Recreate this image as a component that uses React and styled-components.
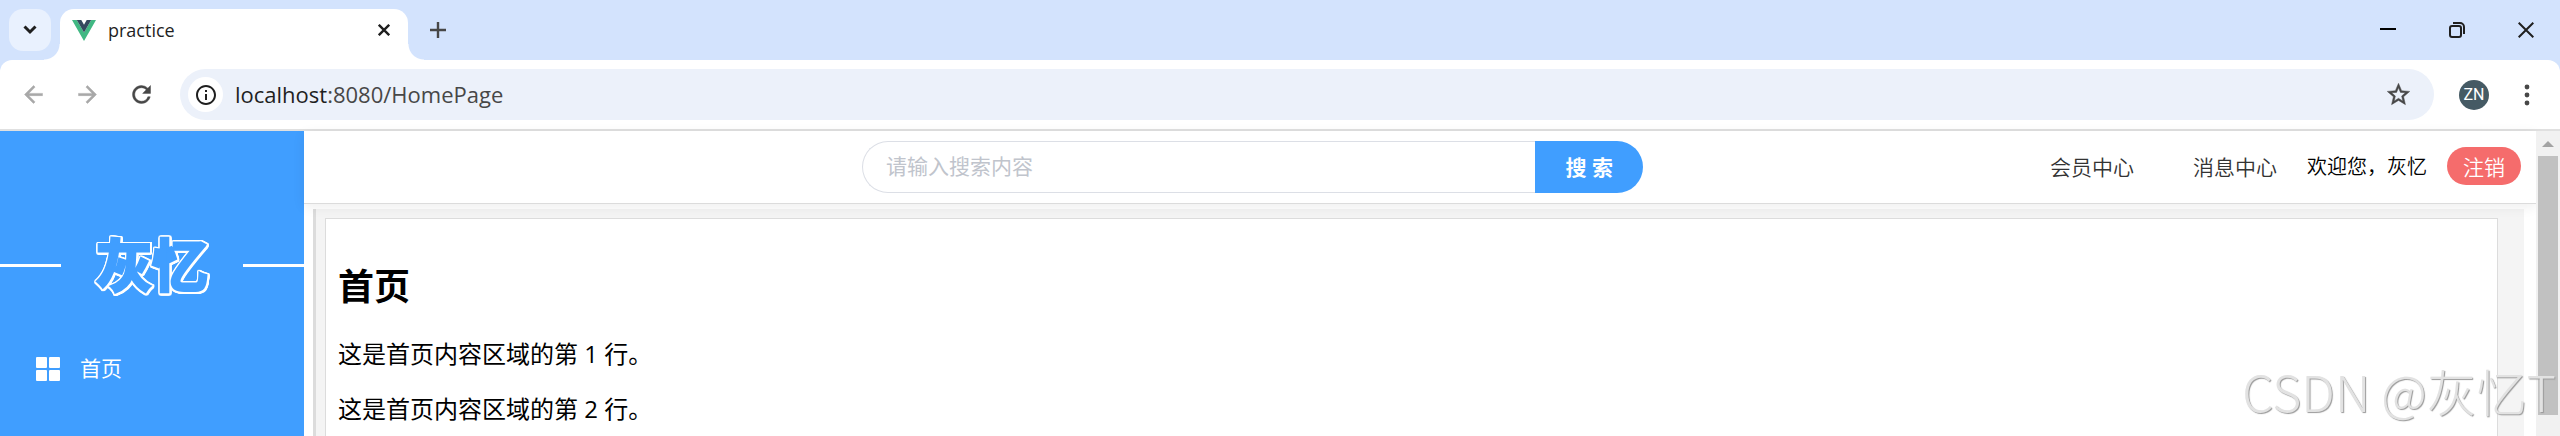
import React from 'react'
import styled, { createGlobalStyle } from 'styled-components'
import {
  MdArrowBack, MdArrowForward, MdRefresh, MdStarBorder, MdInfoOutline,
} from 'react-icons/md'

const paragraphs = [1, 2]

export default function App() {
  return (
    <Window>
      <GlobalStyle />
      <TabStrip />
      <Toolbar />
      <Page>
        <Sidebar />
        <Content>
          <TopBar />
          <HomePage />
        </Content>
        <ScrollBar />
      </Page>
      <Watermark>CSDN @灰忆T</Watermark>
    </Window>
  )
}

const TabStrip = () => (
  <Strip>
    <TabSearch type="button" aria-label="Search tabs">
      <svg width="14" height="10" viewBox="0 0 14 10" fill="none" stroke="currentColor" strokeWidth="3">
        <path d="M1.5 1.5L7 7l5.500-5.500" />
      </svg>
    </TabSearch>
    <Tab>
      <svg width="24" height="21" viewBox="0 0 24 21">
        <path d="M0 0h4.800L12 12.400 19.200 0H24L12 21z" fill="#41b883" />
        <path d="M4.800 0h4.500L12 4.700 14.700 0h4.500L12 12.400z" fill="#34495e" />
      </svg>
      <TabTitle>practice</TabTitle>
      <IconButton type="button" aria-label="Close tab">
        <svg width="12" height="12" viewBox="0 0 12 12" stroke="currentColor" strokeWidth="2.400">
          <path d="M.8.8l10.400 10.400M11.200.8L.8 11.200" />
        </svg>
      </IconButton>
    </Tab>
    <NewTab type="button" aria-label="New tab">
      <svg width="16" height="16" viewBox="0 0 16 16" stroke="currentColor" strokeWidth="2.400">
        <path d="M8 0v16M0 8h16" />
      </svg>
    </NewTab>
    <WindowControls>
      <IconButton type="button" aria-label="Minimize">
        <svg width="16" height="16" viewBox="0 0 16 16">
          <path d="M0 6h16v2H0z" />
        </svg>
      </IconButton>
      <IconButton type="button" aria-label="Restore">
        <svg width="16" height="16" viewBox="0 0 16 16" fill="none" stroke="currentColor" strokeWidth="2">
          <rect x="1" y="4" width="11" height="11" rx="2" />
          <path d="M4 1h7a4 4 0 0 1 4 4v7" />
        </svg>
      </IconButton>
      <IconButton type="button" aria-label="Close">
        <svg width="16" height="16" viewBox="0 0 16 16" stroke="currentColor" strokeWidth="2">
          <path d="M.7.700l14.600 14.600M15.300.7L.7 15.300" />
        </svg>
      </IconButton>
    </WindowControls>
  </Strip>
)

const Toolbar = () => (
  <Bar>
    <NavButtons>
      <IconButton type="button" aria-label="Back" $color="#a8a8a8"><ToolIcon as={MdArrowBack} size={27} /></IconButton>
      <IconButton type="button" aria-label="Forward" $color="#a8a8a8"><ToolIcon as={MdArrowForward} size={27} /></IconButton>
      <IconButton type="button" aria-label="Reload" $color="#474747"><ToolIcon as={MdRefresh} size={27} /></IconButton>
    </NavButtons>
    <Omnibox>
      <SiteInfo type="button" aria-label="Site information"><MdInfoOutline size={24} /></SiteInfo>
      <Url><b>localhost</b>:8080/HomePage</Url>
      <IconButton type="button" aria-label="Bookmark" $color="#474747">
        <ToolIcon as={MdStarBorder} size={27} />
      </IconButton>
    </Omnibox>
    <Avatar type="button">ZN</Avatar>
    <IconButton type="button" aria-label="Menu" $color="#474747">
      <svg width="6" height="22" viewBox="0 0 6 22" fill="currentColor">
        <circle cx="3" cy="3" r="2.400" />
        <circle cx="3" cy="11" r="2.400" />
        <circle cx="3" cy="19" r="2.400" />
      </svg>
    </IconButton>
  </Bar>
)

const Sidebar = () => (
  <Aside>
    <LogoRow>
      <Logo>灰忆</Logo>
    </LogoRow>
    <MenuItem href="#home">
      <svg width="24" height="24" viewBox="0 0 24 24" fill="currentColor">
        <rect width="11" height="11" rx="1" />
        <rect x="13" width="11" height="11" rx="1" />
        <rect y="13" width="11" height="11" rx="1" />
        <rect x="13" y="13" width="11" height="11" rx="1" />
      </svg>
      <span>首页</span>
    </MenuItem>
  </Aside>
)

const TopBar = () => (
  <Header>
    <Search>
      <SearchInput type="text" placeholder="请输入搜索内容" aria-label="请输入搜索内容" />
      <SearchButton type="submit">搜 索</SearchButton>
    </Search>
    <UserNav>
      <NavLink href="#member">会员中心</NavLink>
      <NavLink href="#message">消息中心</NavLink>
      <Welcome>欢迎您，灰忆</Welcome>
      <Logout type="button">注销</Logout>
    </UserNav>
  </Header>
)

const HomePage = () => (
  <Main>
    <Card>
      <Title>首页</Title>
      {paragraphs.map(n => (
        <Text key={n}>这是首页内容区域的第 {n} 行。</Text>
      ))}
    </Card>
  </Main>
)

const ScrollBar = () => (
  <Track>
    <svg width="12" height="6" viewBox="0 0 12 6" fill="#a3a3a3">
      <path d="M6 0l6 6H0z" />
    </svg>
    <Thumb />
  </Track>
)

const GlobalStyle = createGlobalStyle`
  * {
    box-sizing: border-box;
  }
  body {
    margin: 0;
    font-family: "Open Sans", "Noto Sans CJK SC", sans-serif;
    font-size: 21px;
    color: #000;
  }
  button, input {
    font: inherit;
  }
  a {
    text-decoration: none;
  }
  svg {
    display: block;
    flex: none;
  }
`

const Window = styled.div`
  position: relative;
  display: flex;
  flex-direction: column;
  height: 100vh;
  overflow: hidden;
  background: #d3e3fd;
`
const IconButton = styled.button`
  display: flex;
  flex: none;
  padding: 0;
  border: 0;
  background: none;
  color: ${p => p.$color || '#1f1f1f'};
`

const Strip = styled.div`
  display: flex;
  align-items: center;
  flex: none;
  height: 60px;
  padding: 0 26px 0 9px;
`
const TabSearch = styled(IconButton)`
  align-items: center;
  justify-content: center;
  width: 42px;
  height: 42px;
  border-radius: 14px;
  background: #e9f1fe;
`
const Tab = styled.div`
  position: relative;
  display: flex;
  align-items: center;
  align-self: flex-end;
  width: 348px;
  height: 51px;
  margin-left: 9px;
  padding: 0 18px 9px 12px;
  border-radius: 14px 14px 0 0;
  background: #fff;
  &::before,
  &::after {
    content: '';
    position: absolute;
    bottom: 0;
    width: 16px;
    height: 16px;
  }
  &::before {
    right: 100%;
    background: radial-gradient(circle at 0 0, transparent 15px, #fff 16px);
  }
  &::after {
    left: 100%;
    background: radial-gradient(circle at 100% 0, transparent 15px, #fff 16px);
  }
`
const TabTitle = styled.span`
  flex: 1;
  margin-left: 12px;
  font-size: 18px;
  line-height: 24px;
  color: #1f1f1f;
`
const NewTab = styled(IconButton)`
  margin-left: 22px;
  color: #474747;
`
const WindowControls = styled.div`
  display: flex;
  gap: 53px;
  margin-left: auto;
`

const Bar = styled.div`
  display: flex;
  align-items: center;
  flex: none;
  height: 71px;
  padding: 0 30px 0 20px;
  border-bottom: 2px solid #e0e0e0;
  border-radius: 12px 12px 0 0;
  background: #fff;
`
const NavButtons = styled.div`
  display: flex;
  gap: 27px;
  margin-right: 25px;
`
const Omnibox = styled.div`
  display: flex;
  align-items: center;
  flex: 1;
  height: 51px;
  padding: 0 22px 0 8px;
  border-radius: 26px;
  background: #ecf1fa;
`
const SiteInfo = styled(IconButton)`
  align-items: center;
  justify-content: center;
  width: 35px;
  height: 35px;
  border-radius: 50%;
  background: #fff;
`
const Url = styled.span`
  flex: 1;
  margin-left: 12px;
  padding-bottom: 2px;
  font-size: 22px;
  line-height: 30px;
  color: #474747;
  b {
    font-weight: 400;
    color: #1f1f1f;
  }
`
const ToolIcon = styled.svg`
  path:not([fill='none']) {
    stroke: currentColor;
    stroke-width: 0.4;
  }
  path[fill='none'] {
    stroke: none;
  }
`
const Avatar = styled.button`
  width: 30px;
  height: 30px;
  margin: 0 35px 0 25px;
  padding: 0;
  border: 0;
  border-radius: 50%;
  background: #455a64;
  font-family: Roboto, sans-serif;
  font-size: 16px;
  line-height: 30px;
  color: #fff;
`

const Page = styled.div`
  display: flex;
  flex: 1;
  min-height: 0;
  background: #fff;
`
const Aside = styled.aside`
  flex: none;
  width: 304px;
  padding-top: 94px;
  background: #409eff;
`
const LogoRow = styled.div`
  display: flex;
  align-items: center;
  justify-content: space-between;
  height: 80px;
  &::before,
  &::after {
    content: '';
    width: 61px;
    height: 3px;
    background: #fff;
  }
`
/* fat rounded glyphs in the sidebar colour, edged in white */
const Logo = styled.div`
  padding-bottom: 6px;
  font-family: "Noto Sans CJK SC", sans-serif;
  font-size: 56px;
  font-weight: 700;
  line-height: 74px;
  color: #409eff;
  -webkit-text-stroke: 3px #409eff;
  stroke-linejoin: round;
  filter: drop-shadow(1px 0 0 #fff) drop-shadow(-1px 0 0 #fff)
    drop-shadow(0 1px 0 #fff) drop-shadow(0 -1px 0 #fff)
    drop-shadow(1px 0 0 #fff) drop-shadow(0 1px 0 #fff);
`
const MenuItem = styled.a`
  display: flex;
  align-items: center;
  gap: 20px;
  height: 80px;
  margin-top: 24px;
  padding-left: 36px;
  color: #fff;
  span {
    padding-bottom: 4px;
  }
`

const Content = styled.div`
  display: flex;
  flex: 1;
  flex-direction: column;
  min-width: 0;
`
const Header = styled.header`
  position: relative;
  z-index: 1;
  display: flex;
  align-items: center;
  flex: none;
  height: 73px;
  border-bottom: 1px solid #dcdcdc;
  background: #fff;
  box-shadow: 0 3px 12px rgba(0, 0, 0, 0.07);
`
const Search = styled.form`
  display: flex;
  width: 35%;
  height: 52px;
  margin-left: 25%;
`
const SearchInput = styled.input`
  flex: 1;
  min-width: 0;
  padding: 0 23px 2px;
  border: 1px solid #dcdfe6;
  border-right: 0;
  border-radius: 26px 0 0 26px;
  background: #fff;
  outline: none;
  &::placeholder {
    color: #c0c4cc;
  }
`
const SearchButton = styled.button`
  width: 108px;
  padding: 0 0 2px;
  border: 0;
  border-radius: 0 26px 26px 0;
  background: #409eff;
  font-weight: 700;
  color: #fff;
`
const UserNav = styled.nav`
  display: flex;
  align-items: center;
  margin-left: auto;
  padding: 0 15px 2px 0;
  font-family: "Noto Sans CJK SC", sans-serif;
  font-weight: 350;
  line-height: 38px;
  white-space: nowrap;
`
const NavLink = styled.a`
  margin-left: 59px;
  color: #333;
`
const Welcome = styled.span`
  margin: 0 20px 0 30px;
  font-size: 20px;
`
const Logout = styled.button`
  width: 74px;
  height: 38px;
  padding: 0;
  border: 0;
  border-radius: 19px;
  background: #f56c6c;
  line-height: 36px;
  color: #fff;
`

const Main = styled.main`
  display: flex;
  flex: 1;
  min-height: 0;
  margin: 5px 12px 0 9px;
  padding: 9px 26px 0 9px;
  border-left: 3px solid #dcdcdc;
  background: #f4f4f4;
`
const Card = styled.section`
  flex: 1;
  padding: 41px 12px 0;
  border: 1px solid #dcdcdc;
  border-bottom: 0;
  background: #fff;
`
const Title = styled.h1`
  margin: 0 0 24px;
  font-size: 36px;
  font-weight: 700;
  line-height: 54px;
`
const Text = styled.p`
  margin: 0 0 23px;
  font-size: 24px;
  line-height: 32px;
`

const Track = styled.div`
  position: relative;
  z-index: 2;
  display: flex;
  flex-direction: column;
  align-items: center;
  flex: none;
  width: 24px;
  padding: 10px 0 21px;
  background: #f1f1f1;
`
const Thumb = styled.div`
  flex: 1;
  width: 20px;
  margin-top: 9px;
  background: #c1c1c1;
`

const Watermark = styled.div`
  position: absolute;
  z-index: 3;
  right: 4px;
  bottom: 10px;
  font-family: "Noto Sans CJK SC", sans-serif;
  font-size: 50px;
  font-weight: 300;
  line-height: 72px;
  color: #e2e2e2;
  text-shadow: 1px 1px 1px #999;
  white-space: nowrap;
  pointer-events: none;
`
